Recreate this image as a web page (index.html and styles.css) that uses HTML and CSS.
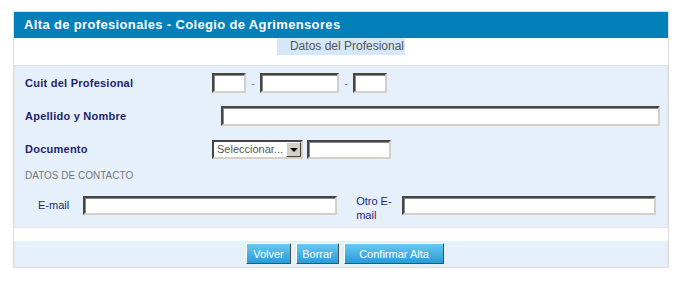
FILE: index.html
```html
<!DOCTYPE html>
<html lang="es">
<head>
    <meta charset="UTF-8">
    <title>Alta de profesionales</title>
    <link rel="stylesheet" href="styles.css">
</head>
<body>
    <div class="panel">
        <div class="panel-title">Alta de profesionales - Colegio de Agrimensores</div>
        <div class="subtitle-row">
            <span class="subtitle">Datos del Profesional</span>
        </div>

        <div class="form-section">
            <div class="form-row">
                <label class="field-label">Cuit del Profesional</label>
                <input type="text" class="input cuit-short">
                <span class="dash">-</span>
                <input type="text" class="input cuit-long">
                <span class="dash">-</span>
                <input type="text" class="input cuit-short">
            </div>
            <div class="form-row">
                <label class="field-label">Apellido y Nombre</label>
                <input type="text" class="input nombre">
            </div>
            <div class="form-row">
                <label class="field-label">Documento</label>
                <div class="select">
                    <span class="select-text">Seleccionar...</span>
                    <span class="select-arrow"></span>
                </div>
                <input type="text" class="input documento">
            </div>

            <div class="section-caption">DATOS DE CONTACTO</div>

            <div class="contact-row">
                <label class="contact-label email-label">E-mail</label>
                <input type="text" class="input email">
                <label class="contact-label otro">Otro E-mail</label>
                <input type="text" class="input email">
            </div>
        </div>

        <div class="spacer"></div>

        <div class="button-row">
            <button class="btn btn-volver">Volver</button>
            <button class="btn btn-borrar">Borrar</button>
            <button class="btn btn-confirmar">Confirmar Alta</button>
        </div>
    </div>
</body>
</html>
```

FILE: styles.css
```css
body {
    margin: 0;
    padding: 11px 0 0 13px;
    background: #fff;
    font-family: 'Liberation Sans', Arial, sans-serif;
}

.panel {
    width: 654px;
    border: 1px solid #dedede;
}

.panel-title {
    height: 26px;
    line-height: 26px;
    padding-left: 10px;
    background: #0380ba;
    color: #fff;
    font-size: 13px;
    font-weight: bold;
    letter-spacing: 0.35px;
}

.subtitle-row {
    height: 27px;
    display: flex;
    justify-content: center;
    align-items: flex-start;
    background: #fff;
}

.subtitle {
    height: 17px;
    line-height: 17px;
    padding: 0 1px 0 13px;
    background: #d5e7f8;
    color: #555;
    font-size: 12px;
}

.form-section {
    height: 154px;
    padding-top: 7px;
    background: #e6f0fa;
    border: 1px solid #dfe3e8;
    border-left-color: #e4e4e4;
}

.form-row {
    display: flex;
    align-items: center;
    height: 20px;
    margin-bottom: 13px;
    padding-left: 10px;
}

.field-label {
    width: 187px;
    color: #1f1f6e;
    font-size: 11px;
    font-weight: bold;
    letter-spacing: 0.25px;
}

.input {
    box-sizing: border-box;
    height: 20px;
    margin: 0;
    padding: 0;
    background: #fff;
    border: 2px solid;
    border-color: #454545 #d4d0c8 #d4d0c8 #454545;
    box-shadow: inset 1px 1px 0 #8a8a8a;
}

.cuit-short {
    width: 34px;
}

.cuit-long {
    width: 79px;
}

.dash {
    width: 14px;
    text-align: center;
    color: #777;
    font-size: 11px;
}

.nombre {
    width: 439px;
    margin-left: 9px;
}

.select {
    box-sizing: border-box;
    width: 91px;
    height: 19px;
    display: flex;
    align-items: center;
    justify-content: space-between;
    background: #fff;
    border: 2px solid;
    border-color: #454545 #d4d0c8 #d4d0c8 #454545;
}

.select-text {
    padding-left: 3px;
    color: #555;
    font-size: 11px;
}

.select-arrow {
    position: relative;
    width: 15px;
    height: 15px;
    box-sizing: border-box;
    background: #d4d0c8;
    border: 1px solid;
    border-color: #fff #404040 #404040 #fff;
}

.select-arrow::after {
    content: "";
    position: absolute;
    left: 3px;
    top: 5px;
    border-left: 4px solid transparent;
    border-right: 4px solid transparent;
    border-top: 4px solid #000;
}

.documento {
    width: 84px;
    height: 19px;
    margin-left: 4px;
}

.section-caption {
    margin-top: -2px;
    padding-left: 10px;
    color: #777;
    font-size: 10px;
    line-height: 12px;
}

.contact-row {
    display: flex;
    align-items: flex-start;
    padding-left: 23px;
}

.contact-label {
    color: #1f1f80;
    font-size: 11px;
    line-height: 14px;
}

.email-label {
    margin-top: 16px;
}

.email {
    width: 254px;
    height: 19px;
    margin-top: 14px;
    margin-left: 14px;
}

.contact-label.otro {
    width: 40px;
    margin-top: 12px;
    margin-left: 19px;
}

.contact-label.otro + .email {
    margin-left: 6px;
}

.spacer {
    height: 13px;
    background: #fff;
}

.button-row {
    display: flex;
    justify-content: center;
    gap: 5px;
    height: 26px;
    padding: 2px 0 0 8px;
    box-sizing: border-box;
    background: #e6f0fa;
    border-left: 1px solid #e4e4e4;
    border-right: 1px solid #e4e4e4;
}

.btn {
    height: 21px;
    padding: 0;
    color: #fff;
    font-family: 'Liberation Sans', Arial, sans-serif;
    font-size: 11px;
    background: linear-gradient(#65c9f2, #2a9bd6);
    border: 1px solid;
    border-color: #fff #4d4d4d #4d4d4d #fff;
    cursor: pointer;
}

.btn-volver {
    width: 45px;
}

.btn-borrar {
    width: 43px;
}

.btn-confirmar {
    width: 100px;
}
```
